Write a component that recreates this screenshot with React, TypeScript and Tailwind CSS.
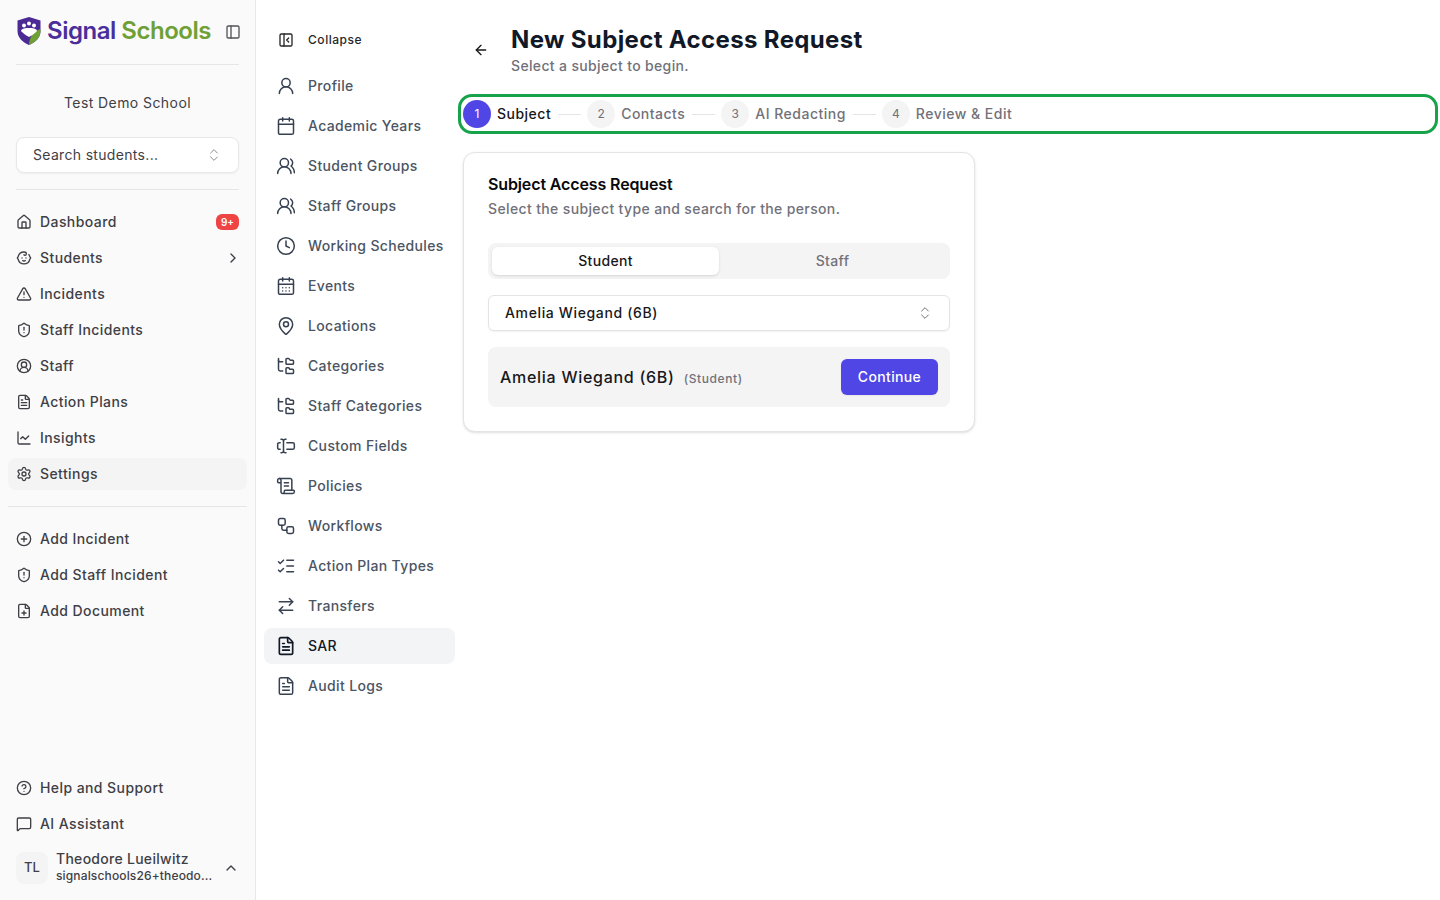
import {
  ArrowLeft,
  ArrowRightLeft,
  Baby,
  Calendar,
  CalendarDays,
  ChartLine,
  ChevronRight,
  ChevronUp,
  ChevronsUpDown,
  CircleHelp,
  CirclePlus,
  CircleUserRound,
  Clock,
  FilePlus,
  FileText,
  FolderTree,
  House,
  ListChecks,
  MapPin,
  MessageSquare,
  PanelLeft,
  PanelLeftClose,
  ScrollText,
  Settings,
  ShieldAlert,
  TextCursorInput,
  TriangleAlert,
  UserRound,
  UsersRound,
  Workflow,
} from "lucide-react"

const mainNav = [
  { label: "Dashboard", icon: House },
  { label: "Students", icon: Baby },
  { label: "Incidents", icon: TriangleAlert },
  { label: "Staff Incidents", icon: ShieldAlert },
  { label: "Staff", icon: CircleUserRound },
  { label: "Action Plans", icon: FileText },
  { label: "Insights", icon: ChartLine },
  { label: "Settings", icon: Settings },
]

const quickNav = [
  { label: "Add Incident", icon: CirclePlus },
  { label: "Add Staff Incident", icon: ShieldAlert },
  { label: "Add Document", icon: FilePlus },
]

const settingsNav = [
  { label: "Profile", icon: UserRound },
  { label: "Academic Years", icon: Calendar },
  { label: "Student Groups", icon: UsersRound },
  { label: "Staff Groups", icon: UsersRound },
  { label: "Working Schedules", icon: Clock },
  { label: "Events", icon: CalendarDays },
  { label: "Locations", icon: MapPin },
  { label: "Categories", icon: FolderTree },
  { label: "Staff Categories", icon: FolderTree },
  { label: "Custom Fields", icon: TextCursorInput },
  { label: "Policies", icon: ScrollText },
  { label: "Workflows", icon: Workflow },
  { label: "Action Plan Types", icon: ListChecks },
  { label: "Transfers", icon: ArrowRightLeft },
  { label: "SAR", icon: FileText },
  { label: "Audit Logs", icon: FileText },
]

const steps = ["Subject", "Contacts", "AI Redacting", "Review & Edit"]

function Logo() {
  return (
    <div className="flex items-center gap-[5px]">
      <svg width="26" height="30" viewBox="0 0 26 30" className="-mt-[2px]">
        <path d="M13 1 L24.5 4.5 V15 C24.5 22 19 26.5 13 29 C7 26.5 1.5 22 1.5 15 V4.5 Z" fill="#4b2a96" />
        <path d="M24.5 13 V15 C24.5 22 19 26.5 13 29 C13 22 17 15 24.5 13 Z" fill="#6fa035" />
        <circle cx="8" cy="9.5" r="2" fill="#fff" />
        <circle cx="13" cy="7.5" r="2" fill="#fff" />
        <circle cx="18" cy="9.5" r="2" fill="#fff" />
        <path d="M5 15 C5 12.5 10 12 13 12 C16 12 21 12.5 21 15 C19 17 17 19 13 21 C9 19 7 17 5 15 Z" fill="#fff" />
      </svg>
      <span className="-mt-[2px] text-[24px] leading-none font-semibold tracking-[-0.02em] whitespace-nowrap">
        <span className="text-[#4b2e9b]">Signal</span> <span className="text-[#6fa035]">Schools</span>
      </span>
    </div>
  )
}

export default function App() {
  return (
    <div className="flex h-[900px] overflow-hidden bg-white text-[#3f3f46] font-['Inter',sans-serif]">
      {/* Main sidebar */}
      <aside className="flex w-[256px] shrink-0 flex-col border-r border-[#e8e8e8] bg-[#fafafa]">
        <div className="flex h-[64px] items-center justify-between pl-4 pr-[14px]">
          <Logo />
          <PanelLeft size={16} className="text-[#52525b]" />
        </div>
        <div className="mx-4 h-px bg-[#e6e6e6]" />
        <div className="pt-[28px] text-center text-[14px] leading-[20px] tracking-[0.03em] text-[#3f3f46]">
          Test Demo School
        </div>
        <div className="mx-4 mt-[24px] flex h-[36px] items-center justify-between rounded-lg border border-[#e8e8e8] bg-white pl-4 pr-4 shadow-xs">
          <span className="-mt-px text-[14px] tracking-[0.023em] text-[#3f3f46]">Search students...</span>
          <ChevronsUpDown size={16} strokeWidth={1.5} className="text-[#8a8a92]" />
        </div>
        <div className="mx-4 mt-4 h-px bg-[#e6e6e6]" />
        <nav className="mt-[16px] flex flex-col gap-1 px-2">
          {mainNav.map(item => (
            <div
              key={item.label}
              className={`flex h-[32px] items-center gap-2 rounded-lg px-2 ${item.label === "Settings" ? "bg-[#f4f4f5]" : ""}`}
            >
              <item.icon size={16} className="shrink-0 text-[#3f3f46]" />
              <span className="-mt-px flex-1 text-[14px] font-medium tracking-[0.03em] text-[#3f3f46]">{item.label}</span>
              {item.label === "Dashboard" && (
                <span className="flex h-[16px] items-center rounded-md bg-[#ef4444] px-[5px] text-[10px] font-semibold text-white">9+</span>
              )}
              {item.label === "Students" && <ChevronRight size={16} className="-mr-[2px] text-[#3f3f46]" />}
            </div>
          ))}
        </nav>
        <div className="mx-2 mt-4 h-px bg-[#e6e6e6]" />
        <nav className="mt-4 flex flex-col gap-1 px-2">
          {quickNav.map(item => (
            <div key={item.label} className="flex h-[32px] items-center gap-2 rounded-lg px-2">
              <item.icon size={16} className="shrink-0 text-[#3f3f46]" />
              <span className="-mt-px text-[14px] font-medium tracking-[0.03em]">{item.label}</span>
            </div>
          ))}
        </nav>
        <div className="mt-auto flex flex-col gap-1 px-2">
          <div className="flex h-[32px] items-center gap-2 px-2">
            <CircleHelp size={16} />
            <span className="-mt-px text-[14px] font-medium tracking-[0.03em]">Help and Support</span>
          </div>
          <div className="flex h-[32px] items-center gap-2 px-2">
            <MessageSquare size={16} />
            <span className="-mt-px text-[14px] font-medium tracking-[0.03em]">AI Assistant</span>
          </div>
        </div>
        <div className="mt-[10px] mb-[14px] flex items-center gap-2 pl-4 pr-4">
          <div className="flex h-[32px] w-[32px] shrink-0 items-center justify-center rounded-lg bg-[#f4f4f5] text-[13px] font-medium">TL</div>
          <div className="mb-[2px] min-w-0 flex-1">
            <div className="text-[14px] leading-[18px] font-medium tracking-[0.02em]">Theodore Lueilwitz</div>
            <div className="text-[12px] leading-[16px] font-medium tracking-[0.012em] whitespace-nowrap">signalschools26+theodo...</div>
          </div>
          <ChevronUp size={16} />
        </div>
      </aside>

      {/* Settings sub navigation */}
      <aside className="flex w-[207px] shrink-0 flex-col pl-2">
        <div className="mt-[22px] flex h-[36px] items-center gap-3 px-3 text-[#27272a]">
          <PanelLeftClose size={16} strokeWidth={2} className="mx-[2px]" />
          <span className="text-[12px] font-medium tracking-[0.045em]">Collapse</span>
        </div>
        <nav className="mt-[10px] flex w-[191px] flex-col gap-1">
          {settingsNav.map(item => (
            <div
              key={item.label}
              className={`flex h-[36px] items-center gap-3 rounded-lg px-3 ${item.label === "SAR" ? "bg-[#f3f4f6] text-[#111827]" : "text-[#4b5563]"}`}
            >
              <item.icon
                size={20}
                strokeWidth={item.label === "SAR" ? 2 : 1.8}
                className={`shrink-0 ${item.label === "SAR" ? "text-[#111827]" : "text-[#374151]"}`}
              />
              <span className="-mt-px text-[14px] font-medium tracking-[0.025em] whitespace-nowrap">{item.label}</span>
            </div>
          ))}
        </nav>
      </aside>

      {/* Page */}
      <main className="min-w-0 flex-1 pr-[2px]">
        <div className="flex items-start gap-[22px] pl-[10px] pt-[24px]">
          <ArrowLeft size={16} className="mt-[18px] text-[#18181b]" />
          <div>
            <h1 className="text-[24px] leading-[32px] font-bold tracking-[0.015em] text-[#111827]">New Subject Access Request</h1>
            <p className="text-[14px] leading-[20px] font-medium tracking-[0.025em] text-[#71717a]">Select a subject to begin.</p>
          </div>
        </div>
        <div className="mt-[18px] -ml-[5px] flex h-[40px] items-center rounded-[14px] border-[3px] border-[#16a34a] pl-[2px]">
          {steps.map((step, i) => (
            <div key={step} className="flex items-center">
              <div className={`flex h-[28px] w-[28px] items-center justify-center rounded-full text-[12px] ${i === 0 ? "bg-[#4f46e5] text-white" : "bg-[#f4f4f5] text-[#71717a]"}`}>
                {i + 1}
              </div>
              <span className={`ml-[6px] -mt-px text-[14px] font-medium tracking-[0.035em] ${i === 0 ? "text-[#18181b]" : "text-[#71717a]"}`}>{step}</span>
              {i < steps.length - 1 && <div className="ml-[7px] mr-[6px] h-px w-[23px] bg-[#e4e4e7]" />}
            </div>
          ))}
        </div>

        <section className="mt-[18px] h-[280px] w-[512px] rounded-xl border border-[#e4e4e7] bg-white px-6 pt-[21px] shadow-sm">
          <h2 className="text-[16px] leading-[20px] font-semibold tracking-[-0.008em] text-[#09090b]">Subject Access Request</h2>
          <p className="mt-[5px] text-[14px] leading-[20px] font-medium tracking-[0.026em] text-[#71717a]">Select the subject type and search for the person.</p>
          <div className="mt-[24px] grid h-[36px] grid-cols-2 rounded-lg bg-[#f4f4f5] p-1">
            <div className="flex items-center justify-center rounded-md bg-white pb-px text-[14px] font-medium tracking-[0.025em] text-[#18181b] shadow-sm">Student</div>
            <div className="flex items-center justify-center pb-px text-[14px] font-medium tracking-[0.025em] text-[#71717a]">Staff</div>
          </div>
          <div className="mt-[16px] flex h-[36px] items-center justify-between rounded-md border border-[#e4e4e7] bg-white pl-4 pr-4 shadow-xs">
            <span className="-mt-px text-[14px] font-medium tracking-[0.046em] text-[#18181b]">Amelia Wiegand (6B)</span>
            <ChevronsUpDown size={16} strokeWidth={1.5} className="text-[#71717a]" />
          </div>
          <div className="mt-[16px] flex h-[60px] items-center justify-between rounded-lg bg-[#f4f4f5] px-3">
            <div className="-mt-px flex items-baseline gap-[9px]">
              <span className="text-[16px] font-medium tracking-[0.045em] text-[#18181b]">Amelia Wiegand (6B)</span>
              <span className="text-[12px] font-medium tracking-[0.05em] text-[#71717a]">(Student)</span>
            </div>
            <div className="flex h-[36px] w-[97px] items-center justify-center rounded-md bg-[#4f46e5] pb-px text-[14px] font-medium tracking-[0.025em] text-white shadow-xs">Continue</div>
          </div>
        </section>
      </main>
    </div>
  )
}
